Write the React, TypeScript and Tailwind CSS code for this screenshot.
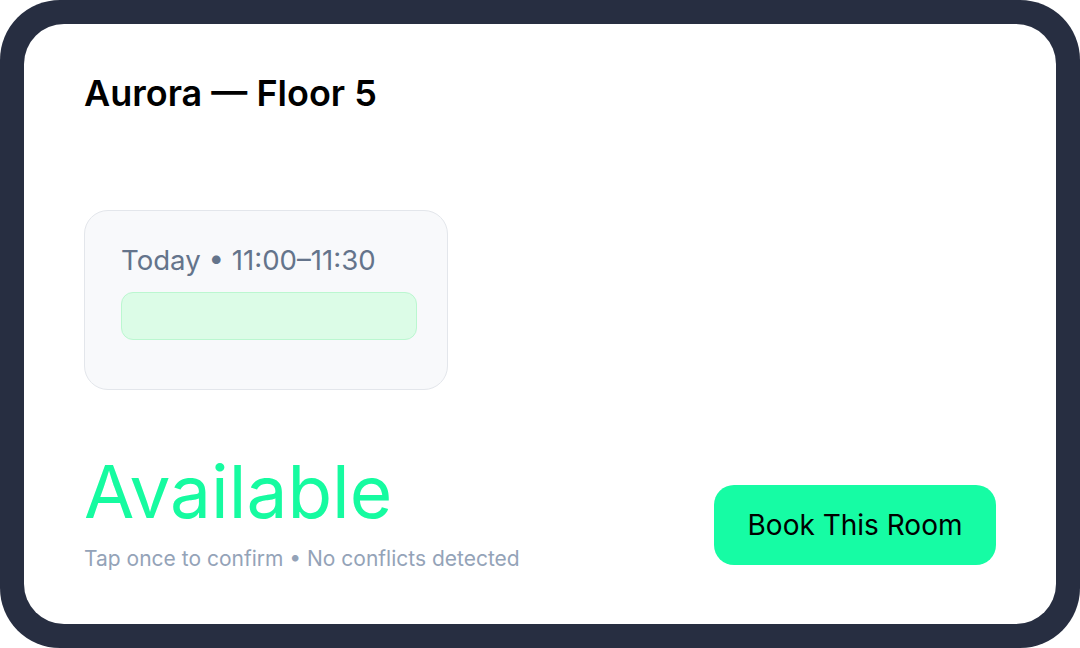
import React from 'react';

export default function App() {
  return (
    <div className="w-[1080px] h-[648px] bg-white" style={{ fontFamily: 'Inter, "Noto Sans", sans-serif' }}>
      <div className="w-full h-full rounded-[60px] bg-[#272e41] p-6">
        <div className="w-full h-full rounded-[40px] bg-white px-[60px] pt-[45px] pb-[51px] flex flex-col">
          {/* Header */}
          <h1 className="text-[36px] leading-[48px] font-semibold text-black">Aurora — Floor 5</h1>

          {/* Slot card */}
          <div className="mt-[93px] w-[364px] h-[180px] rounded-[24px] bg-[#f8f9fb] border border-[#e3e6eb] pl-9 pt-[31px]">
            <div className="text-[27.6px] leading-[36px] text-[#64748b]">Today • 11:00–11:30</div>
            <div className="mt-[14px] w-[296px] h-[48px] rounded-[12px] bg-[#dcfce7] border border-[#bbf7d0]" />
          </div>

          {/* Bottom row */}
          <div className="mt-auto flex items-end justify-between">
            <div className="flex flex-col">
              <div className="text-[73px] leading-[80px] text-[#16fba0]">Available</div>
              <div className="mt-[13px] text-[21px] leading-[28px] text-[#94a3b8]">Tap once to confirm • No conflicts detected</div>
            </div>
            <button className="mb-2 w-[282px] h-[80px] rounded-[20px] bg-[#16fca4] text-[28px] text-black font-normal">
              Book This Room
            </button>
          </div>
        </div>
      </div>
    </div>
  );
}
